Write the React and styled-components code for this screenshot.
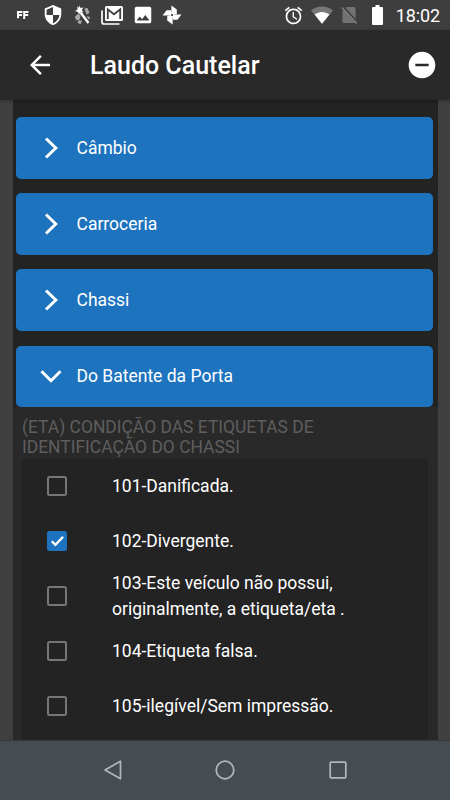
import React, { useState } from 'react';
import styled, { createGlobalStyle } from 'styled-components';
import { MdAlarm, MdArrowBack, MdImage, MdRemoveCircle, MdSecurity } from 'react-icons/md';

const GlobalStyle = createGlobalStyle`
  * {
    box-sizing: border-box;
  }

  body {
    margin: 0;
    background: #404040;
    font-family: Roboto, sans-serif;
    overflow: hidden;
  }
`;

const Screen = styled.div`
  width: 450px;
  height: 800px;
  display: flex;
  flex-direction: column;
  overflow: hidden;
  background: #404040;
`;

const StatusBar = styled.div`
  height: 30px;
  flex: none;
  display: flex;
  align-items: center;
  padding: 0 10px 0 17px;
  background: #3e3e3e;
  color: #fff;
`;

const StatusIcon = styled.span`
  display: flex;
  flex: none;
  margin-left: ${props => props.$gap || 0}px;

  & svg {
    display: block;
  }
`;

const Clock = styled.span`
  margin-left: 13px;
  font-size: 18px;
  line-height: 30px;
  padding-top: 1px;
  letter-spacing: -0.1px;
`;

const Spacer = styled.div`
  flex: 1;
`;

const AppBar = styled.header`
  height: 70px;
  flex: none;
  display: flex;
  align-items: center;
  padding: 0 12px 1px 25px;
  background: #292929;
  color: #fff;
  position: relative;
  box-shadow: 0 1px 4px rgba(0, 0, 0, 0.25);

  & svg {
    display: block;
  }
`;

const IconButton = styled.button`
  border: 0;
  padding: 0;
  background: none;
  color: inherit;
  cursor: pointer;
`;

const Title = styled.h1`
  flex: 1;
  margin: 3px 0 0 35px;
  font-size: 25px;
  font-weight: 500;
  line-height: 30px;
`;

const Content = styled.main`
  flex: 1;
  min-height: 0;
  margin: 0 12.5px;
  padding-top: 17px;
  overflow: hidden;
  background: #232323;
`;

const AccordionButton = styled.button`
  display: flex;
  align-items: center;
  width: 417px;
  height: 61.5px;
  margin: 0 0 ${props => (props.$open ? 0 : 14.7)}px 3.5px;
  padding: 0 0 0 24px;
  border: 0;
  border-radius: 5px;
  background: #1e73be;
  color: #fff;
  font-family: inherit;
  font-size: 17.5px;
  line-height: 20px;
  text-align: left;
  cursor: pointer;

  & svg {
    margin-right: 14.5px;
  }
`;

const Panel = styled.section`
  padding: 10px 9.5px 0;
  background: #292929;
`;

const PanelTitle = styled.h2`
  margin: 0;
  height: 41.5px;
  color: #5e5e5e;
  font-size: 17.45px;
  font-weight: 400;
  line-height: 20px;
`;

const OptionList = styled.div`
  min-height: 300px;
  background: #232323;
`;

const Option = styled.label`
  height: 55px;
  display: flex;
  align-items: center;
  padding: 0 0 1px 25px;
  gap: 45px;
  color: #fff;
  font-size: 17.5px;
  line-height: 26px;
  cursor: pointer;
`;

const CheckBox = styled.span`
  width: 20px;
  height: 20px;
  flex: none;
  border: 2px solid ${props => (props.$checked ? '#1e73be' : '#767676')};
  border-radius: 2.5px;
  background: ${props => (props.$checked ? '#1e73be' : 'transparent')};

  & svg {
    display: block;
  }
`;

const HiddenInput = styled.input`
  display: none;
`;

const OptionText = styled.span`
  width: 250px;
`;

const NavBar = styled.nav`
  height: 60px;
  flex: none;
  display: flex;
  align-items: center;
  justify-content: center;
  gap: 92.5px;
  padding-bottom: 1px;
  border-top: 1px solid #2e3739;
  background: #454d52;
`;

const Gmail = () => (
    <svg width="22" height="20" viewBox="0 0 22 20" fill="none">
        <path d="M1 5.5V17a2 2 0 0 0 2 2h15.500" stroke="#fff" strokeWidth="1.700" />
        <rect x="4" y="1" width="18" height="15" rx="1.500" fill="#fff" />
        <path d="M6.800 14V4.300l6.200 5 6.200-5V14" stroke="#3e3e3e" strokeWidth="1.800" />
    </svg>
);

const Wand = () => (
    <svg width="18" height="20" viewBox="0 0 18 20">
        <path d="M3.500 9L.8 12l1.800 3.500 3-1 1-4zM10.500 3.500l3-.5 2 5-3 1.500zM5 15l3 1-1.500 3.200-3-1.500zM12.500 11l3.500 1-1 3z" fill="#aaa" />
        <path d="M5.500.3l1 2.700 3-.5-1.700 2.500 1.700 2.500-3-.5-1.500 2.700L4 6.900 1 6l2.600-1.600L3.200 1.500 5 2.800z" fill="#fff" />
        <path d="M6.500 7.500L14.500 18" stroke="#fff" strokeWidth="2.300" />
    </svg>
);

const Pinwheel = () => (
    <svg width="20" height="20" viewBox="-10 -10 20 20">
        {[0, 90, 180, 270].map(angle => (
            <path key={angle} d="M-.6-1V-9.500L4.800-5.400V-1L1.200 0z" fill="#fff" transform={`rotate(${angle})`} />
        ))}
        <circle r="1" fill="#3e3e3e" />
    </svg>
);

const Quote = () => (
    <svg width="12" height="10" viewBox="0 0 12 10" fill="none" stroke="#fff" strokeWidth="2">
        <path d="M1 8.200V2h4.500M1 5h4M7.200 9V2H11.500M7.200 5h4" />
    </svg>
);

const Wifi = () => (
    <svg width="22" height="18" viewBox="0 0 22 18">
        <path d="M0 4.600C6-.8 16-.8 22 4.600L11 18z" fill="#777" />
        <path d="M3.600 8.500c4.500-3.500 10.300-3.500 14.800 0L11 17.700z" fill="#fff" />
    </svg>
);

const NoSim = () => (
    <svg width="17" height="18" viewBox="0 0 17 18">
        <path d="M5.500 1H13q1.500 0 1.500 1.500V17H3q-1.500 0-1.500-1.500V5z" fill="#727272" />
        <path d="M.8 0L16.300 17" stroke="#3e3e3e" strokeWidth="3" />
        <path d="M.8 1.500L15.800 17.500" stroke="#828282" strokeWidth="1.400" />
    </svg>
);

const Battery = () => (
    <svg width="11" height="20" viewBox="0 0 11 20" fill="#fff">
        <path d="M3.500 0h4v2H10q1 0 1 1v16q0 1-1 1H1q-1 0-1-1V3q0-1 1-1h2.500z" />
    </svg>
);

const Chevron = ({ open }) => (
    <svg width="22" height="22" viewBox="0 0 22 22" fill="none" stroke="#fff" strokeWidth="3">
        <path d={open ? 'M1.500 6.200L11 15.700l9.500-9.500' : 'M6 1.500l9.800 9.500L6 20.500'} />
    </svg>
);

const Check = () => (
    <svg width="16" height="16" viewBox="0 0 16 16" fill="none" stroke="#fff" strokeWidth="2.300">
        <path d="M2.800 8.300l3.600 3.500 7.700-8" />
    </svg>
);

const sections = ['Câmbio', 'Carroceria', 'Chassi', 'Do Batente da Porta'];

const options = [
    { id: 101, label: '101-Danificada.' },
    { id: 102, label: '102-Divergente.' },
    { id: 103, label: '103-Este veículo não possui, originalmente, a etiqueta/eta .' },
    { id: 104, label: '104-Etiqueta falsa.' },
    { id: 105, label: '105-ilegível/Sem impressão.' },
];

const OptionRow = ({ label, checked, toggle }) => {
    return (
        <Option>
            <HiddenInput type="checkbox" checked={checked} onChange={() => toggle()} />
            <CheckBox $checked={checked}>{checked && <Check />}</CheckBox>
            <OptionText>{label}</OptionText>
        </Option>
    )
}

const App = () => {
    const [open, setOpen] = useState('Do Batente da Porta');
    const [selected, setSelected] = useState([102]);

    const toggle = (id) => {
        setSelected(selected.includes(id) ? selected.filter(item => item !== id) : [...selected, id]);
    }

    return (
        <Screen>
            <GlobalStyle />
            <StatusBar>
                <StatusIcon><Quote /></StatusIcon>
                <StatusIcon $gap={12.5}><MdSecurity size={22} /></StatusIcon>
                <StatusIcon $gap={10.5}><Wand /></StatusIcon>
                <StatusIcon $gap={9}><Gmail /></StatusIcon>
                <StatusIcon $gap={8.5}><MdImage size={22} /></StatusIcon>
                <StatusIcon $gap={8.5}><Pinwheel /></StatusIcon>
                <Spacer />
                <StatusIcon><MdAlarm size={21} /></StatusIcon>
                <StatusIcon $gap={7}><Wifi /></StatusIcon>
                <StatusIcon $gap={7.5}><NoSim /></StatusIcon>
                <StatusIcon $gap={14}><Battery /></StatusIcon>
                <Clock>18:02</Clock>
            </StatusBar>
            <AppBar>
                <IconButton aria-label="Voltar"><MdArrowBack size={30} /></IconButton>
                <Title>Laudo Cautelar</Title>
                <IconButton aria-label="Remover"><MdRemoveCircle size={32} /></IconButton>
            </AppBar>
            <Content>
                {sections.map(name => (
                    <AccordionButton
                        key={name}
                        $open={open === name}
                        onClick={() => setOpen(open === name ? null : name)}
                    >
                        <Chevron open={open === name} />
                        {name}
                    </AccordionButton>
                ))}
                {open && (
                    <Panel>
                        <PanelTitle>(ETA) CONDIÇÃO DAS ETIQUETAS DE IDENTIFICAÇÃO DO CHASSI</PanelTitle>
                        <OptionList>
                            {options.map(({ id, label }) => (
                                <OptionRow
                                    key={id}
                                    label={label}
                                    checked={selected.includes(id)}
                                    toggle={() => toggle(id)}
                                />
                            ))}
                        </OptionList>
                    </Panel>
                )}
            </Content>
            <NavBar>
                <svg width="20" height="20" viewBox="0 0 20 20" fill="none" stroke="#b2b6b8" strokeWidth="1.700" strokeLinejoin="round">
                    <path d="M17.500 1.200v17.600L2 10z" />
                </svg>
                <svg width="20" height="20" viewBox="0 0 20 20" fill="none" stroke="#b2b6b8" strokeWidth="1.700">
                    <circle cx="10" cy="10" r="8.800" />
                </svg>
                <svg width="20" height="20" viewBox="0 0 20 20" fill="none" stroke="#b2b6b8" strokeWidth="1.700">
                    <rect x="2.200" y="2.200" width="15.600" height="15.600" rx="0.800" />
                </svg>
            </NavBar>
        </Screen>
    )
}

export default App;
